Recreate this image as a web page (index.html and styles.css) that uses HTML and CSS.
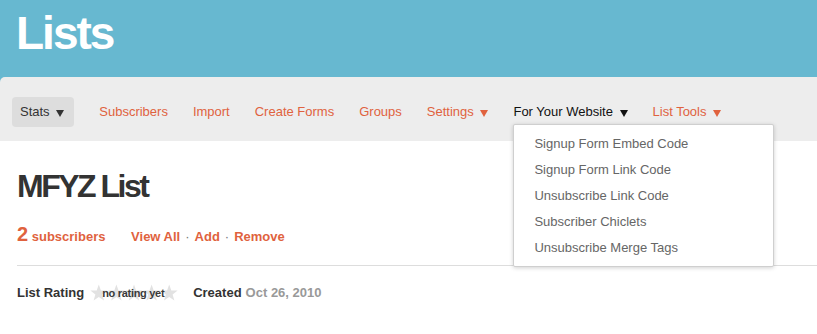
FILE: index.html
```html
<html>
<head>
  <link rel="stylesheet" href="styles.css">
</head>
<body>
  <div class="masthead">
    <h1 class="title">Lists</h1>
    <div class="nav">
      <div class="nav-item active">Stats <span class="arrow"></span></div>
      <div class="nav-item">Subscribers</div>
      <div class="nav-item">Import</div>
      <div class="nav-item">Create Forms</div>
      <div class="nav-item">Groups</div>
      <div class="nav-item">Settings <span class="arrow"></span></div>
      <div class="nav-item open">For Your Website <span class="arrow"></span>
        <div class="dropdown">
          <div class="drop-item">Signup Form Embed Code</div>
          <div class="drop-item">Signup Form Link Code</div>
          <div class="drop-item">Unsubscribe Link Code</div>
          <div class="drop-item">Subscriber Chiclets</div>
          <div class="drop-item">Unsubscribe Merge Tags</div>
        </div>
      </div>
      <div class="nav-item">List Tools <span class="arrow"></span></div>
    </div>
  </div>
  <div class="content">
    <h2 class="list-name">MFYZ List</h2>
    <div class="counts">
      <span class="count"><span class="num">2</span> subscribers</span>
      <span class="links">View All<span class="dot">&middot;</span>Add<span class="dot">&middot;</span>Remove</span>
    </div>
    <div class="rule"></div>
    <div class="meta">
      <span class="label">List Rating</span>
      <span class="rating">
        <svg width="88" height="18" viewBox="0 0 88 18">
          <g fill="#e2e2e2">
            <polygon points="8.8,0.5 10.9,6.4 17.2,6.6 12.2,10.4 14,16.5 8.8,12.9 3.6,16.5 5.4,10.4 0.4,6.6 6.7,6.4"/>
            <polygon points="26.4,0.5 28.5,6.4 34.8,6.6 29.8,10.4 31.6,16.5 26.4,12.9 21.2,16.5 23,10.4 18,6.6 24.3,6.4"/>
            <polygon points="44,0.5 46.1,6.4 52.4,6.6 47.4,10.4 49.2,16.5 44,12.9 38.8,16.5 40.6,10.4 35.6,6.6 41.9,6.4"/>
            <polygon points="61.6,0.5 63.7,6.4 70,6.6 65,10.4 66.8,16.5 61.6,12.9 56.4,16.5 58.2,10.4 53.2,6.6 59.5,6.4"/>
            <polygon points="79.2,0.5 81.3,6.4 87.6,6.6 82.6,10.4 84.4,16.5 79.2,12.9 74,16.5 75.8,10.4 70.8,6.6 77.1,6.4"/>
          </g>
        </svg>
        <span class="rating-text">no rating yet</span>
      </span>
      <span class="label created">Created</span>
      <span class="date">Oct 26, 2010</span>
    </div>
  </div>
</body>
</html>
```

FILE: styles.css
```css
html, body {
  margin: 0;
  padding: 0;
  font-family: "Liberation Sans", Helvetica, Arial, sans-serif;
  background: #ffffff;
}
.masthead {
  background-color: #67b8d0;
}
.title {
  margin: 0;
  height: 77px;
  padding-left: 16px;
  box-sizing: border-box;
  padding-top: 10px;
  font-size: 46px;
  line-height: 46px;
  letter-spacing: -2px;
  color: #ffffff;
  font-weight: bold;
}
.nav {
  display: flex;
  align-items: flex-start;
  gap: 25px;
  height: 64px;
  box-sizing: border-box;
  padding: 20px 0 0 12px;
  background-color: #ededed;
  border-top-left-radius: 5px;
}
.nav-item {
  position: relative;
  font-size: 13px;
  line-height: 30px;
  height: 30px;
  color: #e0623e;
  white-space: nowrap;
}
.nav-item.active {
  background-color: #dddddd;
  color: #333333;
  border-radius: 4px;
  padding: 0 10px 0 8px;
}
.nav-item.open {
  color: #111111;
}
.arrow {
  display: inline-block;
  width: 0;
  height: 0;
  border-left: 4px solid transparent;
  border-right: 4px solid transparent;
  border-top: 7px solid currentColor;
  margin-left: 3px;
  vertical-align: -1px;
}
.dropdown {
  position: absolute;
  top: 27px;
  left: 0;
  width: 261px;
  box-sizing: border-box;
  padding: 6px 0 5px 0;
  background: #ffffff;
  border: 1px solid #cfcfcf;
  border-radius: 2px;
  box-shadow: 0 1px 4px rgba(0, 0, 0, 0.18);
  z-index: 10;
}
.drop-item {
  padding-left: 20px;
  line-height: 26px;
  font-size: 13px;
  color: #666666;
}
.content {
  padding-left: 17px;
}
.list-name {
  margin: 26px 0 0 0;
  font-size: 32px;
  line-height: 38px;
  letter-spacing: -2.5px;
  color: #333333;
  font-weight: bold;
}
.counts {
  margin-top: 17px;
  font-size: 13px;
  line-height: 24px;
  font-weight: bold;
  color: #e0623e;
}
.num {
  font-size: 20px;
}
.links {
  margin-left: 22px;
}
.dot {
  color: #777777;
  font-weight: normal;
  margin: 0 5px;
}
.rule {
  margin-top: 16px;
  border-top: 1px solid #dddddd;
}
.meta {
  margin-top: 17px;
  font-size: 13px;
  line-height: 20px;
  display: flex;
  align-items: center;
}
.label {
  font-weight: bold;
  color: #333333;
}
.rating {
  position: relative;
  display: inline-block;
  width: 88px;
  height: 18px;
  margin-left: 6px;
}
.rating svg {
  display: block;
}
.rating-text {
  position: absolute;
  left: 12px;
  top: 1px;
  font-size: 11px;
  line-height: 16px;
  letter-spacing: -0.3px;
  font-weight: bold;
  color: #3a3a3a;
}
.created {
  margin-left: 15px;
}
.date {
  margin-left: 4px;
  font-weight: bold;
  color: #999999;
}
```
